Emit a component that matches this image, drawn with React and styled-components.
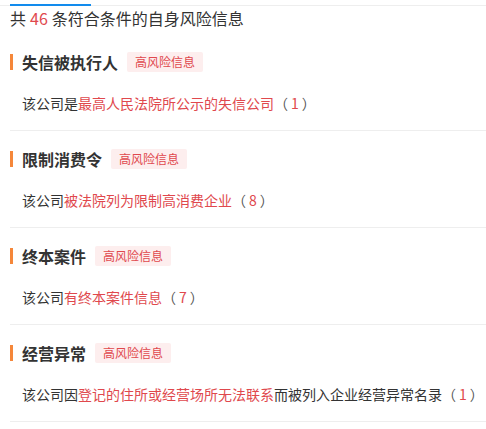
import React from "react";
import styled, { createGlobalStyle } from "styled-components";

const GlobalStyle = createGlobalStyle`
	html, body {
		margin: 0;
		padding: 0;
		background: #fff;
	}
	body {
		font-family: "Microsoft YaHei", "Noto Sans CJK SC", "Liberation Sans", sans-serif;
		color: #333;
	}
`;

const risks = [
	{
		title: "失信被执行人",
		prefix: "该公司是",
		link: "最高人民法院所公示的失信公司",
		suffix: "",
		count: 1,
	},
	{
		title: "限制消费令",
		prefix: "该公司",
		link: "被法院列为限制高消费企业",
		suffix: "",
		count: 8,
	},
	{
		title: "终本案件",
		prefix: "该公司",
		link: "有终本案件信息",
		suffix: "",
		count: 7,
	},
	{
		title: "经营异常",
		prefix: "该公司因",
		link: "登记的住所或经营场所无法联系",
		suffix: "而被列入企业经营异常名录",
		count: 1,
	},
];

const Page = styled.div`
	width: 486px;
	overflow: hidden;
`;

const TabBar = styled.div`
	height: 5px;
	border-bottom: 1px solid #eeeeee;
	position: relative;
`;

const TabIndicator = styled.div`
	position: absolute;
	left: 10px;
	bottom: -1px;
	width: 81px;
	height: 2px;
	background: #128bed;
`;

const Summary = styled.div`
	padding-left: 10px;
	height: 28px;
	line-height: 24px;
	font-size: 16px;
	color: #333;
`;

const Num = styled.span`
	color: #e0484d;
	margin: 0 4px;
`;

const Section = styled.section`
	margin-left: 10px;
	padding: 11px 0 16px;
	border-bottom: 1px solid #eeeeee;
`;

const Header = styled.div`
	display: flex;
	align-items: center;
	height: 34px;
`;

const Bar = styled.span`
	width: 3px;
	height: 16px;
	background: #f5873a;
	margin-right: 9px;
	flex-shrink: 0;
`;

const Title = styled.h3`
	margin: 0;
	font-size: 16px;
	font-weight: bold;
	color: #333;
	line-height: 24px;
`;

const Tag = styled.span`
	margin-left: 9px;
	padding: 0 8px;
	height: 20px;
	line-height: 20px;
	font-size: 12px;
	color: #e0484d;
	background: #fdeeee;
	border-radius: 2px;
`;

const Desc = styled.p`
	margin: 13px 0 0 12px;
	font-size: 14px;
	line-height: 22px;
	color: #333;
	white-space: nowrap;
`;

const Red = styled.span`
	color: #e0484d;
`;

const Paren = styled.span`
	color: #555;
`;

const Count = styled.span`
	color: #e0484d;
	margin: 0 3px;
`;

function RiskSection({ item }) {
	return (
		<Section>
			<Header>
				<Bar />
				<Title>{item.title}</Title>
				<Tag>高风险信息</Tag>
			</Header>
			<Desc>
				{item.prefix}
				<Red>{item.link}</Red>
				{item.suffix}
				<Paren>（</Paren>
				<Count>{item.count}</Count>
				<Paren>）</Paren>
			</Desc>
		</Section>
	);
}

export default function App() {
	return (
		<Page>
			<GlobalStyle />
			<TabBar>
				<TabIndicator />
			</TabBar>
			<Summary>
				共<Num>46</Num>条符合条件的自身风险信息
			</Summary>
			{risks.map((item) => (
				<RiskSection key={item.title} item={item} />
			))}
		</Page>
	);
}
